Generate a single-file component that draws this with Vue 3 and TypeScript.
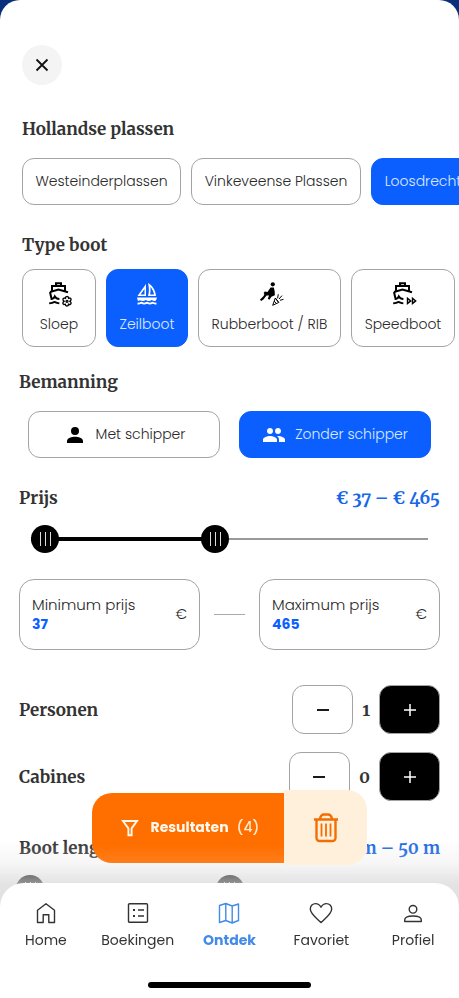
<script setup lang="ts">
import { ref } from 'vue'

type BoatIcon = 'sloop' | 'sail' | 'rib' | 'speed'
type NavIcon = 'home' | 'bookings' | 'map' | 'heart' | 'profile'

const lakes = ['Westeinderplassen', 'Vinkeveense Plassen', 'Loosdrechtse Plassen']
const activeLake = ref(2)

const boats: { label: string; icon: BoatIcon }[] = [
  { label: 'Sloep', icon: 'sloop' },
  { label: 'Zeilboot', icon: 'sail' },
  { label: 'Rubberboot / RIB', icon: 'rib' },
  { label: 'Speedboot', icon: 'speed' },
]
const activeBoat = ref(1)

const withSkipper = ref(false)
const minPrice = ref(37)
const maxPrice = ref(465)
const minLength = ref(0)
const maxLength = ref(50)

const counters = ref([
  { label: 'Personen', value: 1 },
  { label: 'Cabines', value: 0 },
])

const nav: { label: string; icon: NavIcon }[] = [
  { label: 'Home', icon: 'home' },
  { label: 'Boekingen', icon: 'bookings' },
  { label: 'Ontdek', icon: 'map' },
  { label: 'Favoriet', icon: 'heart' },
  { label: 'Profiel', icon: 'profile' },
]
</script>

<template>
  <div class="screen">
    <main class="sheet">
      <button class="close" type="button" aria-label="Sluiten">
        <svg width="14" height="14" viewBox="0 0 14 14"><path d="M1.5 1.5 12.5 12.5M12.5 1.5 1.5 12.5" fill="none" stroke="currentColor" stroke-width="1.8" /></svg>
      </button>

      <section class="group wide">
        <h2>Hollandse plassen</h2>
        <div class="lakes">
          <button v-for="(lake, i) in lakes" :key="lake" type="button" class="option" :class="{ active: activeLake === i }" @click="activeLake = i">{{ lake }}</button>
        </div>
      </section>

      <section class="group wide">
        <h2>Type boot</h2>
        <div class="boats">
          <button v-for="(boat, i) in boats" :key="boat.label" type="button" class="option boat" :class="{ active: activeBoat === i }" @click="activeBoat = i">
            <svg width="28" height="28" viewBox="0 0 28 28" fill="none" stroke="currentColor" stroke-width="1.8">
              <g v-if="boat.icon === 'sloop' || boat.icon === 'speed'">
                <path d="M11 4.500V2.300h5v2.200M7 10.500V5h13v5.500" stroke-width="2" />
                <path d="M5 11 13.500 8.500 23 11.300" stroke-width="2" />
                <path d="M5 11 6.600 18C8 18.100 9.200 16.800 9.800 15.500c1 1.700 2.200 2.500 4.600 2.500" stroke-width="2" />
                <path d="M4.200 22.300c3.200 0 3.600-1.200 5.300-1.200s2.200 1.200 4.800 1.200" stroke-width="2" />
                <path v-if="boat.icon === 'speed'" d="m18.500 17.300 3.200 2.600-3.200 2.600zM23.500 17.300l3.200 2.600-3.200 2.600z" stroke-width="1.400" />
                <g v-else stroke-width="1.300">
                  <path d="m20.700 16 1.300-.5 1.300.5.3 1.400 1.400-.4 1.100.9-.2 1.400-1.100 1 1.100 1.100.1 1.400-1.200.9-1.300-.5-.3 1.400-1.200.5-1.300-.5-.3-1.400-1.400.4-1.100-.9.200-1.500 1.100-.9-1.100-1.100-.1-1.400 1.200-.8 1.300.4z" />
                  <circle cx="22" cy="20.300" r="1" />
                </g>
              </g>
              <g v-else-if="boat.icon === 'sail'" stroke="none" fill="currentColor">
                <path fill-rule="evenodd" d="M13 3v12H4.500zM11.500 8l-4 5.600h4zM15 2c4.500 2.500 7.500 7 8 13h-8c1.200-4 1.200-8 0-13zm2.300 4c.5 2.500.4 5.200-.2 7.600h4c-.6-3-1.800-5.600-3.800-7.600z" />
                <path d="M4 16.500h20c-.3 1.400-.8 2.500-1.600 3.500-1.400.2-2.300-.1-3.600-.9-2 1.200-4 1.200-6 0-2 1.200-4 1.200-5.800.2-.8.5-1.300.7-2 .7-.5-1-.8-2.200-1-3.500z" />
                <path d="M4.500 21.700c2 0 2.800-.4 3.800-.9 2 1.100 3.800 1.100 5.700 0 2 1.100 3.800 1.100 5.700 0 1 .5 1.900.9 3.800.9v1.900c-1.700 0-2.700-.3-3.800-.8-1.900.9-3.800.9-5.700 0-1.900.9-3.800.9-5.700 0-1.200.5-2.100.8-3.800.8z" />
              </g>
              <g v-else>
                <circle cx="16.800" cy="3.300" r="2.100" fill="currentColor" stroke="none" />
                <path d="M14.500 6.500h3.300c.8 2.500 1.100 5 1 7.700l-3.400 1.600-2 2.900-1.600-.9 1.300-3.300-2.500.1-3.200 3.800-2.200 1.700-1.300-1.300 3.700-3.900.8-2-.8-.9 1.300-1.400 2.600.4z" fill="currentColor" stroke="none" />
                <path d="m19.300 17-2.600 7.300 6-2.800zM19.300 17l3.400 4.500M18.300 20.200l2 2.300" stroke-width="1" />
                <path d="m21.600 17.300.7-4M23 18l3-3.400M24 19.300l3.500-1" stroke-width="1" />
              </g>
            </svg>
            <span>{{ boat.label }}</span>
          </button>
        </div>
      </section>

      <section class="group">
        <h2>Bemanning</h2>
        <div class="crew">
          <button type="button" class="option" :class="{ active: withSkipper }" @click="withSkipper = true">
            <svg width="24" height="24" viewBox="0 0 24 24" fill="currentColor"><circle cx="12" cy="8" r="4" /><path d="M4 20v-2c0-3 5-4.300 8-4.300s8 1.300 8 4.300v2z" /></svg>
            Met schipper
          </button>
          <button type="button" class="option" :class="{ active: !withSkipper }" @click="withSkipper = false">
            <svg width="24" height="24" viewBox="0 0 24 24" fill="currentColor"><path d="M16 11c1.700 0 3-1.300 3-3s-1.300-3-3-3-3 1.300-3 3 1.300 3 3 3zm-8 0c1.700 0 3-1.300 3-3S9.700 5 8 5 5 6.300 5 8s1.300 3 3 3zm0 2c-2.300 0-7 1.200-7 3.500V19h14v-2.500C15 14.200 10.300 13 8 13zm8 0h-1c1.200.8 2 2 2 3.500V19h6v-2.500c0-2.300-4.700-3.500-7-3.500z" /></svg>
            Zonder schipper
          </button>
        </div>
      </section>

      <section class="group">
        <div class="row">
          <h2>Prijs</h2>
          <output class="amount">€ {{ minPrice }} – € {{ maxPrice }}</output>
        </div>
        <div class="slider price">
          <div class="track"><div class="fill"></div></div>
          <input v-model.number="minPrice" type="range" min="37" max="966" aria-label="Laagste prijs" />
          <input v-model.number="maxPrice" type="range" min="37" max="966" aria-label="Hoogste prijs" />
        </div>
        <div class="prices">
          <div class="field">
            <div class="entry">
              <label for="min-price">Minimum prijs</label>
              <input id="min-price" v-model.number="minPrice" type="text" inputmode="numeric" />
            </div>
            <span class="euro">€</span>
          </div>
          <span class="dash"></span>
          <div class="field">
            <div class="entry">
              <label for="max-price">Maximum prijs</label>
              <input id="max-price" v-model.number="maxPrice" type="text" inputmode="numeric" />
            </div>
            <span class="euro">€</span>
          </div>
        </div>
      </section>

      <section class="counters">
        <div v-for="c in counters" :key="c.label" class="row">
          <h2>{{ c.label }}</h2>
          <div class="stepper">
            <button type="button" :aria-label="`Minder ${c.label}`" @click="c.value = Math.max(0, c.value - 1)">
              <svg width="14" height="14" viewBox="0 0 14 14"><path d="M1 7h12" stroke="currentColor" stroke-width="1.800" /></svg>
            </button>
            <output>{{ c.value }}</output>
            <button type="button" class="plus" :aria-label="`Meer ${c.label}`" @click="c.value++">
              <svg width="14" height="14" viewBox="0 0 14 14"><path d="M1 7h12M7 1v12" stroke="currentColor" stroke-width="1.500" /></svg>
            </button>
          </div>
        </div>
      </section>

      <section class="length">
        <div class="row">
          <h2>Boot lengte</h2>
          <output class="amount">{{ minLength }} m – {{ maxLength }} m</output>
        </div>
        <div class="slider">
          <div class="track"></div>
          <input v-model.number="minLength" type="range" min="0" max="99" aria-label="Kleinste lengte" />
          <input v-model.number="maxLength" type="range" min="0" max="99" aria-label="Grootste lengte" />
        </div>
      </section>
    </main>

    <footer class="dock">
      <div class="actions">
        <button type="button" class="results">
          <svg width="18" height="18" viewBox="0 0 18 18" fill="none" stroke="currentColor" stroke-width="1.900"><path d="M2 2h14L10.600 9.400V16.300H7.400V9.400z" /></svg>
          <strong>Resultaten</strong><span>(4)</span>
        </button>
        <button type="button" class="clear" aria-label="Filters wissen">
          <svg width="26" height="30" viewBox="0 0 26 30" fill="none" stroke="currentColor" stroke-width="2.400"><path d="M1 6.500h24M3.500 6.500V25a3 3 0 0 0 3 3h13a3 3 0 0 0 3-3V6.500M7 6C7.500 3 9.500 1.500 11 1.500h4C17 1.500 18.500 3 19 6" /><path d="M8.500 10.500v13M13 10.500v13M17.500 10.500v13" stroke-width="1.800" /></svg>
        </button>
      </div>
      <nav class="tabs">
        <div class="links">
          <a v-for="item in nav" :key="item.label" href="#" :class="{ current: item.icon === 'map' }">
            <svg width="24" height="24" viewBox="0 0 24 24" fill="none" stroke="currentColor" stroke-width="1.400" stroke-linejoin="round">
              <path v-if="item.icon === 'home'" d="M3.500 21.500V9.300L12 2.700l8.500 6.600v12.200h-5.700v-7.700H9.200v7.700z" />
              <g v-else-if="item.icon === 'bookings'"><rect x="2.500" y="2.700" width="19" height="18.600" rx="1" /><path d="M12 9h6M12 15h6" /><path d="M7 9h2M7 15h2" stroke-width="2" /></g>
              <path v-else-if="item.icon === 'map'" d="M2.500 4.500 8.800 2.500l6.400 2.500 6.300-2v16.500L15.200 22l-6.400-2.500-6.300 2zM8.800 2.500v17M15.200 5v17" />
              <path v-else-if="item.icon === 'heart'" d="M12 21.500C8 17.500 1.300 13 1.300 8c0-3.200 2.500-5.400 5.300-5.400 2.400 0 4.200 1.500 5.400 3.600 1.200-2.100 3-3.600 5.400-3.600 2.800 0 5.300 2.200 5.300 5.400 0 5-6.700 9.500-10.700 13.500z" />
              <g v-else><circle cx="12" cy="8.300" r="3.800" /><path d="M3.700 20.500v-1.500c0-2.800 4-4 8.300-4s8.300 1.200 8.300 4v1.500z" /></g>
            </svg>
            <span>{{ item.label }}</span>
          </a>
        </div>
        <div class="home-bar"></div>
      </nav>
    </footer>
  </div>
</template>

<style>
body {
  background: #082f7c;
}
</style>

<style scoped>
.screen {
  height: 100vh;
  overflow: hidden;
  color: #292929;
  font: 300 14px/21px Poppins, Inter, sans-serif;
}
.screen * {
  box-sizing: border-box;
}
button,
input {
  font: inherit;
  color: inherit;
}
button {
  padding: 0;
  cursor: pointer;
}
svg {
  flex: none;
}
.sheet {
  height: 100%;
  overflow: hidden;
  padding: 45px 19px 0;
  background: #fff;
  border-radius: 20px 20px 0 0;
}
.close {
  display: grid;
  place-items: center;
  width: 40px;
  height: 40px;
  margin: 0 3px 32px;
  border: 0;
  border-radius: 50%;
  background: #f4f4f4;
  color: #111;
}
h2,
.amount,
.stepper output {
  margin: 0;
  color: #333;
  font: 700 17px/24px Merriweather, "DejaVu Serif Condensed", "DejaVu Serif", serif;
  font-variant-numeric: oldstyle-nums;
}
.group {
  margin-bottom: 28px;
}
.wide {
  padding-left: 3px;
}
.wide + .wide {
  margin-bottom: 23px;
}
.option {
  display: flex;
  align-items: center;
  justify-content: center;
  height: 47px;
  gap: 9px;
  border: 1px solid #a3a3a3;
  border-radius: 12px;
  background: #fff;
  white-space: nowrap;
}
.option svg {
  color: #000;
}
.option.active {
  border-color: #0b5fff;
  background: #0b5fff;
  color: #dceaff;
}
.option.active svg {
  color: #fff;
}
.lakes,
.boats {
  display: grid;
  gap: 10px;
}
.lakes {
  grid-template-columns: 159px 170px 176px;
  margin-top: 17px;
}
.boats {
  grid-template-columns: 74px 82px 143px 104px;
  margin-top: 12px;
}
.boat {
  flex-direction: column;
  gap: 5px;
  height: 78px;
}
.crew {
  display: grid;
  grid-template-columns: 1fr 1fr;
  gap: 19px;
  padding: 0 9px;
  margin-top: 17px;
}
.row {
  display: flex;
  align-items: center;
  justify-content: space-between;
}
.row .amount {
  color: #1767e8;
}
.slider {
  display: grid;
  align-items: center;
  height: 28px;
  margin: 15px 0 0 -3px;
}
.slider > * {
  grid-area: 1 / 1;
}
.slider.price {
  margin: 15px 12px 26px;
}
.track {
  height: 2px;
  background: #999;
}
.fill {
  width: 46%;
  height: 4px;
  margin-top: -1px;
  background: #000;
}
.slider input {
  appearance: none;
  width: 100%;
  height: 28px;
  margin: 0;
  background: none;
  pointer-events: none;
}
.slider input::-webkit-slider-thumb {
  appearance: none;
  width: 28px;
  height: 28px;
  border: 0;
  border-radius: 50%;
  background:
    linear-gradient(90deg, #ddd 1px, transparent 1px 5px, #ddd 5px 6px, transparent 6px 10px, #ddd 10px) center / 11px 14px no-repeat,
    #000;
  pointer-events: auto;
}
.prices {
  display: grid;
  grid-template-columns: 1fr 31px 1fr;
  align-items: center;
  gap: 14px;
}
.field {
  display: flex;
  align-items: center;
  min-width: 0;
  height: 71px;
  padding: 0 12px;
  border: 1px solid #a3a3a3;
  border-radius: 15px;
}
.entry {
  display: flex;
  flex: 1;
  flex-direction: column;
  min-width: 0;
}
.entry label {
  font-size: 15px;
  line-height: 20px;
}
.entry input {
  width: 100%;
  height: 20px;
  padding: 0;
  border: 0;
  background: none;
  color: #0b5fff;
  font-weight: 700;
}
.dash {
  height: 1px;
  background: #aaa;
}
.counters {
  display: grid;
  gap: 18px;
  margin: 35px 0;
}
.stepper {
  display: flex;
  align-items: center;
  gap: 9px;
}
.stepper button {
  display: grid;
  place-items: center;
  width: 61px;
  height: 49px;
  border: 1px solid #a3a3a3;
  border-radius: 12px;
  background: #fff;
  color: #000;
}
.stepper .plus {
  background: #000;
  color: #fff;
}
.dock {
  position: fixed;
  inset: auto 0 0;
  display: flex;
  flex-direction: column;
  gap: 18px;
}
.dock::before {
  content: "";
  position: absolute;
  inset: 50px 0 80px;
  background: linear-gradient(transparent, rgb(225 225 225 / 30%) 24px, rgb(215 215 215 / 70%) 44px, rgb(220 220 220 / 90%));
}
.actions {
  position: relative;
  display: flex;
  align-items: center;
  align-self: center;
}
.actions button {
  display: flex;
  align-items: center;
  justify-content: center;
  border: 0;
}
.results {
  width: 192px;
  height: 70px;
  gap: 8px;
  padding-left: 4px;
  border-radius: 20px 0 0 20px;
  background: linear-gradient(#ff6f00 75%, #ff7d1c);
  color: #ffe9cf;
  font-weight: 500;
}
.results svg,
.results strong {
  color: #fff8ee;
}
.results svg {
  margin-right: 4px;
}
.results strong {
  font-weight: 700;
}
.clear {
  width: 83px;
  height: 75px;
  border-radius: 0 20px 20px 0;
  background: #fff0dc;
  color: #f46d00;
}
.tabs {
  position: relative;
  display: flex;
  flex-direction: column;
  justify-content: space-between;
  height: 115px;
  padding: 18px 0 10px;
  border-radius: 24px 24px 0 0;
  background: #fff;
}
.links {
  display: grid;
  grid-template-columns: repeat(5, 1fr);
}
.links a {
  display: flex;
  flex-direction: column;
  align-items: center;
  gap: 5px;
  color: #333;
  font-weight: 400;
  text-decoration: none;
}
.links .current {
  color: #438be8;
  font-weight: 700;
}
.home-bar {
  align-self: center;
  width: 163px;
  height: 6px;
  border-radius: 3px;
  background: #000;
}
</style>
